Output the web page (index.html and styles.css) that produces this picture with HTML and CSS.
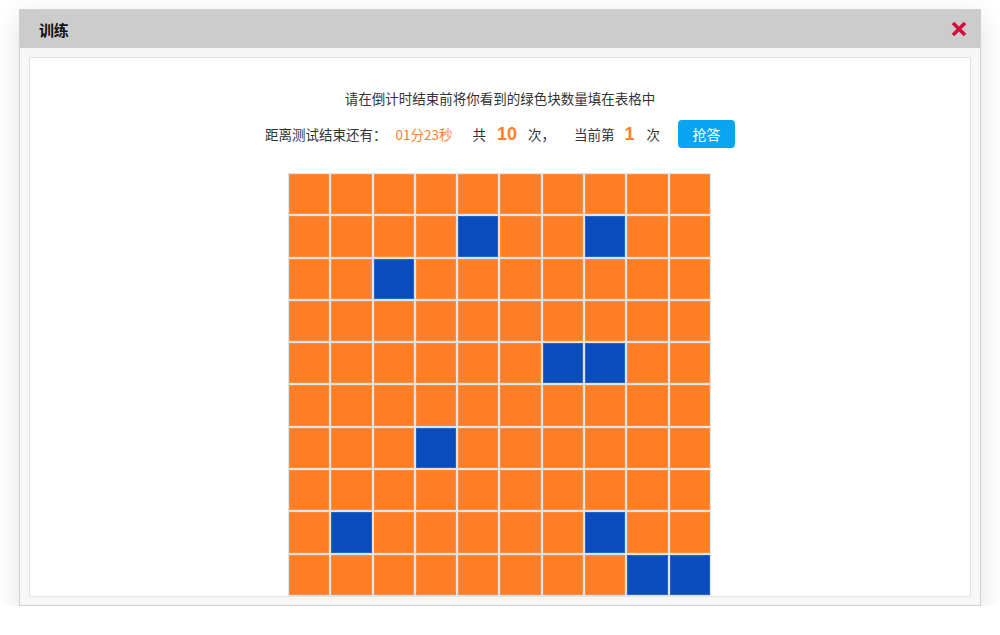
FILE: index.html
```html
<!DOCTYPE html>
<html lang="zh">
<head>
<meta charset="utf-8">
<title>训练</title>
<link rel="stylesheet" href="styles.css">
</head>
<body>
<div class="dialog">
  <div class="dialog-header">
    <span class="dialog-title">训练</span>
    <span class="close-btn" aria-label="关闭">
      <svg width="16" height="16" viewBox="0 0 16 16"><path d="M2 2 L14 14 M14 2 L2 14" stroke="#d20f3c" stroke-width="3.6" stroke-linecap="butt"/></svg>
    </span>
  </div>
  <div class="dialog-body">
    <div class="panel">
      <p class="instruction">请在倒计时结束前将你看到的绿色块数量填在表格中</p>
      <div class="status-row">
        <span class="label">距离测试结束还有：</span>
        <span class="timer">01分23秒</span>
        <span class="txt gap-l20">共</span>
        <span class="num gap-l11">10</span>
        <span class="txt gap-l11">次，</span>
        <span class="txt gap-l19">当前第</span>
        <span class="num gap-l10">1</span>
        <span class="txt gap-l12">次</span>
        <button class="answer-btn">抢答</button>
      </div>
      <div class="grid" id="grid"></div>
    </div>
  </div>
</div>
<script>
  var blue = {"1-4":1,"1-7":1,"2-2":1,"4-6":1,"4-7":1,"6-3":1,"8-1":1,"8-7":1,"9-8":1,"9-9":1};
  var g = document.getElementById('grid');
  for (var r = 0; r < 10; r++) {
    for (var c = 0; c < 10; c++) {
      var d = document.createElement('div');
      d.className = 'cell' + (blue[r + '-' + c] ? ' blue' : '');
      g.appendChild(d);
    }
  }
</script>
</body>
</html>
```

FILE: styles.css
```css
html, body {
  margin: 0;
  padding: 0;
  background: #ffffff;
  font-family: "Noto Sans CJK SC", "Microsoft YaHei", sans-serif;
  color: #333333;
}

body {
  padding: 9px 0 0 19px;
}

.dialog {
  width: 960px;
  height: 595px;
  border: 1px solid #cfcfcf;
  background: #f7f7f7;
  box-shadow: 0 8px 26px rgba(0, 0, 0, 0.12);
  display: flex;
  flex-direction: column;
}

.dialog-header {
  height: 38px;
  background: #cccccc;
  display: flex;
  align-items: center;
  justify-content: space-between;
  padding: 0 13px 0 19px;
  flex-shrink: 0;
}

.dialog-title {
  font-size: 15px;
  font-weight: 700;
  color: #111111;
  letter-spacing: -0.3px;
}

.close-btn {
  display: flex;
  width: 16px;
  height: 16px;
  cursor: pointer;
}

.dialog-body {
  flex: 1;
  padding: 9px 9px 9px 9px;
  display: flex;
}

.panel {
  flex: 1;
  background: #ffffff;
  border: 1px solid #e2e2e2;
  border-bottom-color: #e4e4e4;
  overflow: hidden;
  display: flex;
  flex-direction: column;
  align-items: center;
}

.instruction {
  margin: 30px 0 0 0;
  font-size: 13.5px;
  line-height: 20px;
  color: #333333;
}

.status-row {
  margin-top: 12px;
  height: 28px;
  display: flex;
  align-items: center;
  font-size: 13.5px;
  color: #333333;
}

.timer {
  color: #ff7f27;
  margin-left: 9px;
}

.num {
  color: #ff7f27;
  font-weight: 700;
  font-size: 18px;
  font-family: "Liberation Sans", Arial, sans-serif;
}

.gap-l20 { margin-left: 20px; }
.gap-l19 { margin-left: 19px; }
.gap-l12 { margin-left: 12px; }
.gap-l11 { margin-left: 11px; }
.gap-l10 { margin-left: 10px; }

.answer-btn {
  margin-left: 18px;
  width: 57px;
  height: 28px;
  border: none;
  border-radius: 4px;
  background: #09a5f3;
  color: #ffffff;
  font-family: "Noto Sans CJK SC", sans-serif;
  font-size: 14px;
  padding: 0;
  cursor: pointer;
}

.grid {
  margin-top: 25px;
  margin-right: 1px;
  width: 423px;
  height: 423px;
  flex-shrink: 0;
  box-sizing: border-box;
  background: #dde4ec;
  padding: 1px;
  display: grid;
  grid-template-columns: repeat(10, 1fr);
  grid-template-rows: repeat(10, 1fr);
  gap: 2px;
}

.cell {
  background: #ff7f28;
  box-shadow: inset 0 0 0 1px #ff8d3c;
}

.cell.blue {
  background: #0a4cbc;
  box-shadow: inset 0 0 0 1px #2a62c8;
}
```
